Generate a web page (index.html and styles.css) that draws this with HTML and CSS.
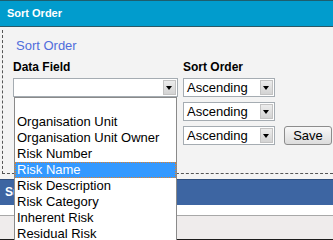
FILE: index.html
```html
<!DOCTYPE html>
<html lang="en">
<head>
  <meta charset="UTF-8">
  <title>Sort Order</title>
  <link rel="stylesheet" href="styles.css">
</head>
<body>
  <div class="titlebar">Sort Order</div>

  <div class="panel">
    <div class="fieldset">
      <div class="legend">Sort Order</div>

      <div class="sort-grid">
        <label class="field-label">Data Field</label>
        <label class="field-label">Sort Order</label>
        <span></span>

        <!-- row 1 -->
        <div class="select-wrap">
          <div class="select wide">
            <span class="select-value"></span>
            <span class="select-arrow"></span>
          </div>

          <!-- open dropdown list -->
          <ul class="dropdown">
            <li>&nbsp;</li>
            <li>Organisation Unit</li>
            <li>Organisation Unit Owner</li>
            <li>Risk Number</li>
            <li class="selected">Risk Name</li>
            <li>Risk Description</li>
            <li>Risk Category</li>
            <li>Inherent Risk</li>
            <li>Residual Risk</li>
          </ul>
        </div>
        <div class="select">
          <span class="select-value">Ascending</span>
          <span class="select-arrow"></span>
        </div>
        <span></span>

        <!-- row 2 -->
        <span></span>
        <div class="select">
          <span class="select-value">Ascending</span>
          <span class="select-arrow"></span>
        </div>
        <span></span>

        <!-- row 3 -->
        <span></span>
        <div class="select">
          <span class="select-value">Ascending</span>
          <span class="select-arrow"></span>
        </div>
        <button type="button" class="save-btn">Save</button>
      </div>
    </div>
  </div>

  <div class="section-bar">Summary</div>
  <div class="spacer"></div>
  <div class="footer"></div>
</body>
</html>
```

FILE: styles.css
```css
body {
  margin: 0;
  padding: 0;
  width: 333px;
  height: 240px;
  overflow: hidden;
  background: #fff;
  font-family: 'Liberation Sans', Arial, sans-serif;
}

.titlebar {
  height: 25px;
  line-height: 25px;
  padding-left: 7px;
  background: #019ccd;
  border-top: 1px solid #1d5e6e;
  border-bottom: 1px solid #2a5866;
  color: #fff;
  font-size: 11px;
  font-weight: bold;
}

.panel {
  background: #f3f3f3;
  padding: 3px 0 5px 0;
}

.fieldset {
  margin-left: 2px;
  padding: 8px 0 28px 10px;
  border-left: 1px dashed #555;
  border-bottom: 1px dashed #555;
}

.legend {
  margin-left: 3px;
  color: #506ddc;
  font-size: 13px;
  line-height: 15px;
}

.sort-grid {
  display: grid;
  grid-template-columns: 165px 92px 48px;
  grid-template-rows: 13px 19px 19px 19px;
  column-gap: 5px;
  row-gap: 5px;
  margin-top: 7px;
}

.field-label {
  font-size: 12px;
  font-weight: bold;
  color: #000;
  line-height: 14px;
}

/* Old style select box */
.select {
  position: relative;
  box-sizing: border-box;
  height: 19px;
  background: #fff;
  border: 1px solid #a5acb2;
}

.select-value {
  display: block;
  padding-left: 3px;
  font-size: 13px;
  line-height: 17px;
  color: #000;
}

.select-arrow {
  position: absolute;
  top: 1px;
  right: 1px;
  bottom: 1px;
  width: 13px;
  box-sizing: border-box;
  border: 1px solid #c3c3c3;
  background: linear-gradient(#ececec, #d3d3d3);
}

.select-arrow::after {
  content: '';
  position: absolute;
  left: 2px;
  top: 5px;
  border-left: 3.5px solid transparent;
  border-right: 3.5px solid transparent;
  border-top: 4px solid #000;
}

.select-wrap {
  position: relative;
}

.dropdown {
  position: absolute;
  top: 19px;
  left: 1px;
  width: 161px;
  margin: 0;
  padding: 0;
  list-style: none;
  background: #fff;
  border: 1px solid #8a8a8a;
  z-index: 5;
}

.dropdown li {
  height: 16px;
  line-height: 16px;
  padding-left: 2px;
  font-size: 13px;
  color: #000;
  white-space: nowrap;
}

.dropdown li.selected {
  background: #3399ff;
  color: #fff;
  outline: 1px dotted #e0822c;
  outline-offset: -1px;
}

.save-btn {
  margin-left: 4px;
  height: 19px;
  width: 48px;
  padding: 0;
  border: 1px solid #8c8c8c;
  border-radius: 3px;
  background: linear-gradient(#f8f8f8, #dcdcdc);
  font-family: 'Liberation Sans', Arial, sans-serif;
  font-size: 13px;
  color: #000;
}

.section-bar {
  height: 25px;
  line-height: 25px;
  padding-left: 5px;
  background: #3d65a2;
  border-top: 1px solid #2e4d7c;
  color: #fff;
  font-size: 12px;
  font-weight: bold;
}

.spacer {
  height: 10px;
  background: #fff;
  border-bottom: 1px solid #a8a8a8;
}

.footer {
  height: 23px;
  background: #efecec;
  border-bottom: 3px solid #1c1c1c;
}
```
